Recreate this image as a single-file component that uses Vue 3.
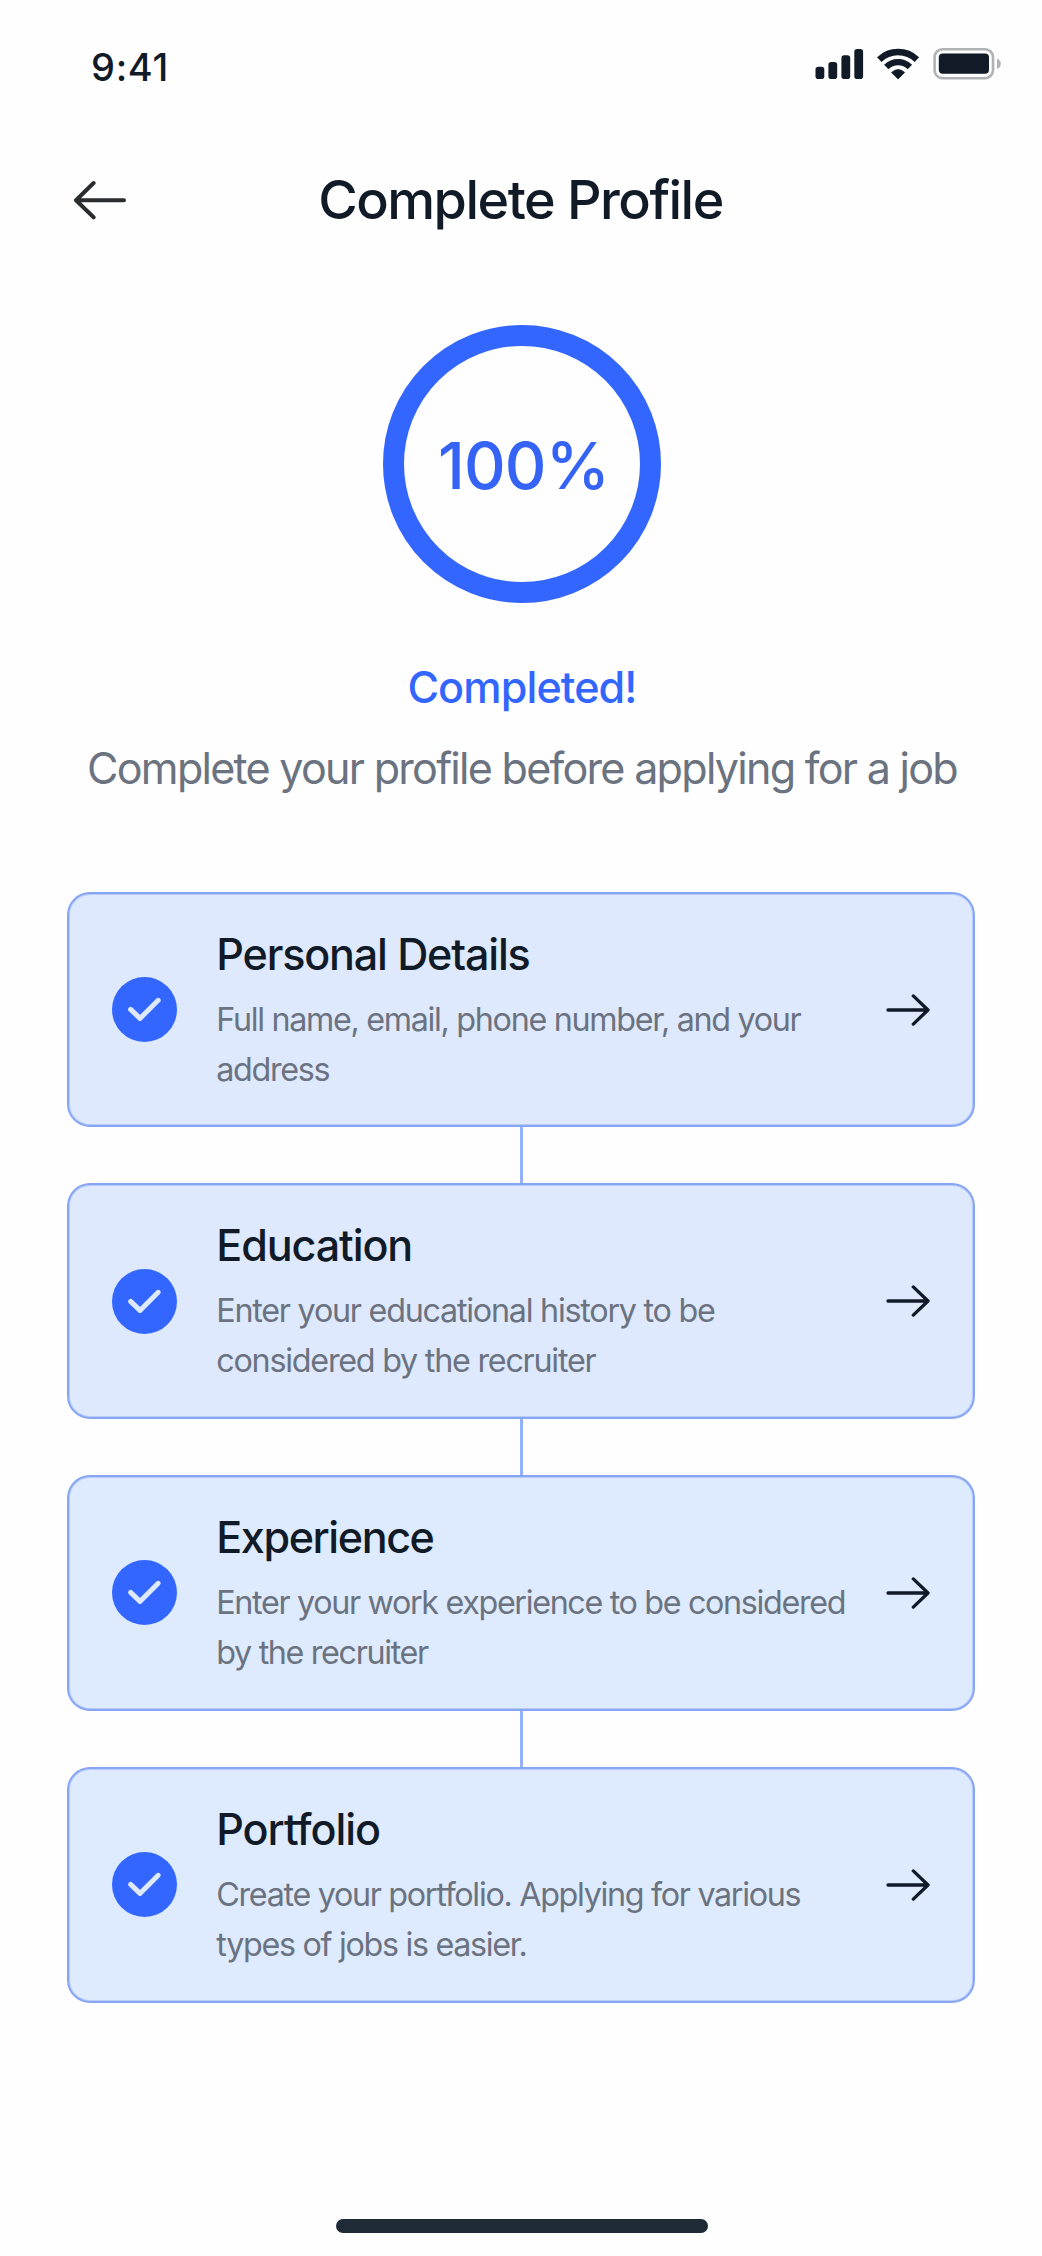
<script setup>
const steps = [
  { title: 'Personal Details', spacing: -1.167, lineSpacing: -1.32, lines: ['Full name, email, phone number, and your', 'address'], tone: 'tone-a' },
  { title: 'Education', spacing: -1.1, lineSpacing: -1.25, lines: ['Enter your educational history to be', 'considered by the recruiter'], tone: 'tone-a' },
  { title: 'Experience', spacing: -1.425, lineSpacing: -1.35, lines: ['Enter your work experience to be considered', 'by the recruiter'], tone: 'tone-b' },
  { title: 'Portfolio', spacing: -1.06, lineSpacing: -1.32, lines: ['Create your portfolio. Applying for various', 'types of jobs is easier.'], tone: 'tone-b' },
]
</script>

<template>
  <main class="screen">
    <div class="status">
      <span class="time">9:41</span>
      <svg class="status-icons" width="188" height="36" viewBox="0 0 188 36">
        <g fill="#111a27">
          <rect x="0.5" y="20.7" width="8.8" height="12.3" rx="2.8" />
          <rect x="13.4" y="16" width="8.8" height="17" rx="2.8" />
          <rect x="26.4" y="9.3" width="8.8" height="23.7" rx="2.8" />
          <rect x="39.3" y="3" width="8.8" height="30" rx="2.8" />
          <path d="M83.1 33 L76.6 26.4 Q83.1 20.8 89.6 26.4 Z" stroke="#111a27" stroke-width="0.8" stroke-linejoin="round" />
          <rect x="123.8" y="7.4" width="50.2" height="20.4" rx="4" />
        </g>
        <g fill="none" stroke="#111a27">
          <path d="M64.3 13.6 A27.2 27.2 0 0 1 101.9 13.6" stroke-width="6.4" />
          <path d="M71.3 20.9 A17 17 0 0 1 94.9 20.9" stroke-width="6.2" />
        </g>
        <rect x="119.6" y="3.2" width="58.4" height="29" rx="8" fill="none" stroke="#b0b2b6" stroke-width="2.6" />
        <path d="M182 12.4 Q185.8 14 185.8 17.7 Q185.8 21.4 182 23 Z" fill="#b0b2b6" />
      </svg>
    </div>

    <header class="header">
      <svg class="back" width="54" height="40" viewBox="0 0 54 40" fill="none" stroke="#2a2d30" stroke-width="4" stroke-linecap="round" stroke-linejoin="round">
        <path d="M51 20.3H3M20.6 3L3 20.3L20.6 37.3" />
      </svg>
      <h1>Complete Profile</h1>
    </header>

    <section class="progress">
      <div class="ring"><span>100%</span></div>
      <p class="done">Completed!</p>
      <p class="hint">Complete your profile before applying for a job</p>
    </section>

    <section class="steps">
      <template v-for="(step, i) in steps" :key="step.title">
        <div v-if="i" class="link"></div>
        <article class="card" :class="step.tone">
          <svg class="check" width="65" height="65" viewBox="0 0 65 65" fill="none">
            <circle cx="32.5" cy="32.5" r="32.5" fill="#3266ff" />
            <path d="M18.6 32.4L28 41.4L46.2 23.3" stroke="#dfe9fe" stroke-width="5" stroke-linecap="round" stroke-linejoin="round" />
          </svg>
          <div class="copy">
            <h2 :style="{ letterSpacing: step.spacing + 'px' }">{{ step.title }}</h2>
            <p v-for="line in step.lines" :key="line" :style="{ letterSpacing: step.lineSpacing + 'px' }">{{ line }}</p>
          </div>
          <svg class="go" width="44" height="32" viewBox="0 0 44 32" fill="none" stroke="#111a27" stroke-width="3.3" stroke-linecap="round" stroke-linejoin="round">
            <path d="M2 16H42M27.3 1.9L42 16L27.3 30.1" />
          </svg>
        </article>
      </template>
    </section>

    <div class="home"></div>
  </main>
</template>

<style>
body {
  margin: 0;
  background: #fff;
}
</style>

<style scoped>
.screen {
  box-sizing: border-box;
  width: 1042px;
  height: 2256px;
  display: flex;
  flex-direction: column;
  background: #fefefe;
  color: #111a27;
  font-family: Inter, "Liberation Sans", sans-serif;
}
h1, h2, p {
  margin: 0;
  font-weight: 500;
  white-space: nowrap;
}
.status {
  display: flex;
  justify-content: space-between;
  align-items: flex-start;
  height: 123px;
  padding: 44px 39px 0 91px;
}
.time {
  font-size: 38px;
  line-height: 46px;
  font-weight: 500;
  letter-spacing: 0.7px;
}
.status-icons {
  margin-top: 2px;
}
.header {
  display: grid;
  grid-template-columns: 1fr auto 1fr;
  align-items: center;
  padding: 0 74px 0 73px;
}
.header h1 {
  font-size: 53.9px;
  line-height: 66px;
  letter-spacing: -1.5px;
}
.progress {
  display: flex;
  flex-direction: column;
  align-items: center;
  padding: 92px 0 0 2px;
}
.ring {
  box-sizing: border-box;
  width: 278px;
  height: 278px;
  border: 21px solid #3266ff;
  border-radius: 50%;
  display: flex;
  justify-content: center;
  align-items: center;
  color: #3563f5;
}
.ring span {
  padding: 3px 0 0 3px;
  font-size: 64.7px;
  line-height: 80px;
  font-weight: 500;
  letter-spacing: -0.92px;
}
.done {
  margin-top: 57px;
  color: #3266ff;
  font-size: 43.1px;
  line-height: 54px;
  letter-spacing: -0.88px;
}
.hint {
  margin-top: 26.5px;
  color: #6b7280;
  font-size: 43.1px;
  line-height: 54px;
  font-weight: 400;
  letter-spacing: -1.74px;
}
.steps {
  margin: 97.2px 67px 0;
  display: flex;
  flex-direction: column;
  align-items: center;
}
.link {
  width: 3px;
  height: 55.9px;
  background: #93b0f8;
}
.card {
  box-sizing: border-box;
  width: 908px;
  height: 235.8px;
  border: 2px solid #86a6f5;
  border-radius: 23px;
  box-shadow: inset 0 0 0 1px #b8ccfb;
  padding: 0 43px;
  display: flex;
  align-items: center;
}
.tone-a {
  background: #dee9fe;
}
.tone-b {
  background: #deebfe;
}
.check, .go {
  flex: none;
}
.copy {
  flex: 1;
  align-self: flex-start;
  min-width: 0;
  padding: 33px 0 0 39.3px;
}
.copy h2 {
  margin-bottom: 14px;
  font-size: 43.1px;
  line-height: 54px;
}
.copy p {
  color: #6b7280;
  font-size: 32.3px;
  line-height: 50px;
  font-weight: 400;
}
.home {
  width: 372px;
  height: 14.3px;
  margin: auto auto 22.7px 336px;
  border-radius: 8px;
  background: #1f2a37;
}
</style>
